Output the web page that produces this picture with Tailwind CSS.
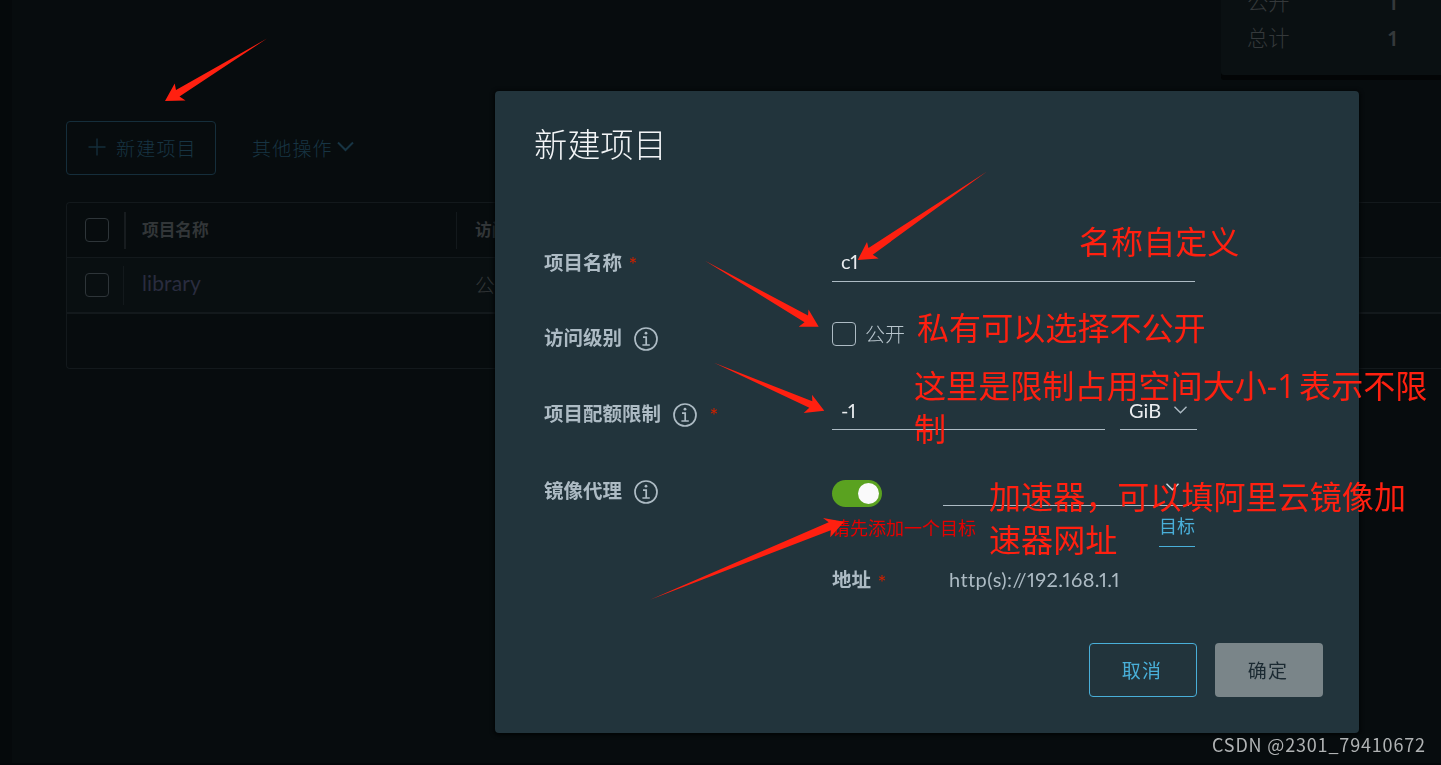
<!DOCTYPE html>
<html lang="zh-CN">
<head>
    <meta charset="UTF-8">
    <meta name="viewport" content="width=device-width, initial-scale=1.0">
    <title>新建项目</title>
    <script src="https://cdn.jsdelivr.net/npm/@tailwindcss/browser@4"></script>
</head>
<body class="bg-[#070c0e] h-[765px] overflow-hidden proportional-nums font-['Lato','Noto_Sans_CJK_SC',sans-serif]">
    <!-- Projects page, dimmed by the modal -->
    <div class="flex h-[765px] w-full border-b-2 border-[#04070a]">
        <div class="w-3 shrink-0 bg-[#05090b]"></div>
        <main class="flex-1 min-w-0 pl-[54px]">
            <!-- Summary card -->
            <div class="flex justify-end h-[121px]">
                <div class="flex flex-col justify-end w-[220px] h-[75px] pb-[19px] pl-[26px] pr-11 bg-[#0a1012] rounded-bl-[3px] shadow-[0_5px_0_#030506] text-[21.3px] text-[#35393b] font-light leading-9">
                    <div class="flex justify-between h-9 shrink-0">
                        <span>公开</span>
                        <span class="font-bold">1</span>
                    </div>
                    <div class="flex justify-between h-9 shrink-0">
                        <span>总计</span>
                        <span class="font-bold">1</span>
                    </div>
                </div>
            </div>

            <!-- Actions -->
            <div class="flex h-[54px] items-center text-[19px] text-[#173443] font-light">
                <button class="flex items-center w-[150px] h-[54px] pl-[21px] border border-[#152e3b] rounded">
                    <svg class="w-[18px] h-[18px] mr-[10px] -mt-[3px]" viewBox="0 0 18 18" fill="none" stroke="#152e3b" stroke-width="1.4"><path d="M9 0.5v17M0.5 9h17"/></svg>
                    <span class="tracking-[1.2px] whitespace-nowrap mt-0.5">新建项目</span>
                </button>
                <button class="flex items-center ml-9">
                    <span class="tracking-[1.2px] mt-0.5">其他操作</span>
                    <svg class="w-[17px] h-[11px] ml-1 -mt-1" viewBox="0 0 17 11" fill="none" stroke="currentColor" stroke-width="2"><path d="M1 1.5l7.5 7.5L16 1.5"/></svg>
                </button>
            </div>

            <!-- Project list -->
            <div class="mt-[27px] h-[167px] border border-r-0 border-[#13191c] rounded-l text-[#323638]">
                <div class="flex items-center h-[55px] border-b border-[#13191c] font-bold text-[16.7px]">
                    <div class="w-6 h-6 ml-[18px] border border-[#2e3539] rounded"></div>
                    <div class="w-0.5 h-[37px] ml-[15px] bg-[#171c1f]"></div>
                    <span class="ml-4 w-[314px] mt-px">项目名称</span>
                    <div class="w-px h-[37px] bg-[#13191c]"></div>
                    <span class="ml-[18px] mt-px">访问级别</span>
                </div>
                <div class="flex items-center h-[56px] border-b-2 border-[#13191c] bg-[#090f11] text-[20px] font-light">
                    <div class="w-6 h-6 ml-[18px] border border-[#2e3539] rounded"></div>
                    <div class="w-px h-[39px] ml-[14px] bg-[#13191c]"></div>
                    <span class="ml-[18px] w-[333px] -mt-1 text-[21px] text-[#292c3f] font-normal tracking-[0.1px]">library</span>
                    <span>公开</span>
                </div>
            </div>
        </main>
    </div>

    <!-- New project modal -->
    <div class="fixed inset-0 pt-[91px] pl-[495px]">
        <div class="w-[864px] h-[642px] pt-[26px] bg-[#22343c] rounded shadow-[0_1px_4px_1px_#020405] text-[#adbbc4]">
            <h3 class="h-[54px] pl-[39px] text-[33.2px] leading-[54px] font-light text-[#f2f4f6]">新建项目</h3>

            <form class="mt-[53px] pl-[49px] text-[19.5px]">
                <!-- Name -->
                <div class="flex h-[76px]">
                    <label class="flex items-center w-72 pt-px font-bold">项目名称<span class="ml-[7px] mt-px text-[16px] font-normal text-[#c92100] font-['Inter',sans-serif]">*</span></label>
                    <div class="flex items-center w-[363px] h-10 mt-[18px] pb-0.5 pl-[9px] border-b border-[#adbbc4] text-[20px] tracking-[-0.3px] text-[#e9ecef]">c1</div>
                </div>

                <!-- Access level -->
                <div class="flex h-[76px]">
                    <label class="flex items-center w-72 pb-px font-bold">访问级别
                        <svg class="w-6 h-6 ml-3 mt-[2px]" viewBox="0 0 24 24" fill="none" stroke="currentColor" stroke-width="1.7"><circle cx="12" cy="12" r="11"/><circle cx="12" cy="6.2" r="1.4" fill="currentColor" stroke="none"/><path d="M9 10.2h3.2v7.6M8.4 18h7.4"/></svg>
                    </label>
                    <div class="w-6 h-6 mt-[22px] border border-[#adbbc4] rounded"></div>
                    <span class="ml-[9px] mt-[19px] font-light text-[20px] text-[#b8c5cd]">公开</span>
                </div>

                <!-- Storage quota -->
                <div class="flex h-[76px]">
                    <label class="flex items-center w-72 pb-px font-bold">项目配额限制
                        <svg class="w-6 h-6 ml-3 mt-[2px]" viewBox="0 0 24 24" fill="none" stroke="currentColor" stroke-width="1.7"><circle cx="12" cy="12" r="11"/><circle cx="12" cy="6.2" r="1.4" fill="currentColor" stroke="none"/><path d="M9 10.2h3.2v7.6M8.4 18h7.4"/></svg>
                        <span class="ml-[13px] mt-px text-[16px] font-normal text-[#c92100] font-['Inter',sans-serif]">*</span>
                    </label>
                    <div class="flex items-center w-[273px] h-10 mt-[14px] pl-[9px] border-b border-[#adbbc4] text-[20px] tracking-[-0.5px] text-[#e9ecef]">-1</div>
                    <div class="flex items-center w-[77px] h-10 mt-[14px] ml-[15px] pl-[9px] border-b border-[#adbbc4] text-[20px] text-[#e9ecef]">
                        GiB
                        <svg class="w-[13px] h-2 ml-[13px]" viewBox="0 0 13 8" fill="none" stroke="#adbbc4" stroke-width="1.4"><path d="M0.5 0.8l6 6 6-6"/></svg>
                    </div>
                </div>

                <!-- Proxy cache -->
                <div class="flex h-[152px]">
                    <label class="flex items-center w-72 h-[76px] pt-px font-bold">镜像代理
                        <svg class="w-6 h-6 ml-3 mt-[2px]" viewBox="0 0 24 24" fill="none" stroke="currentColor" stroke-width="1.7"><circle cx="12" cy="12" r="11"/><circle cx="12" cy="6.2" r="1.4" fill="currentColor" stroke="none"/><path d="M9 10.2h3.2v7.6M8.4 18h7.4"/></svg>
                    </label>
                    <div class="w-[363px]">
                        <div class="flex h-[54px]">
                            <div class="flex justify-end items-center w-[50px] h-[27px] mt-7 pr-[3px] rounded-full bg-[#5aa220]">
                                <div class="w-[21px] h-[21px] rounded-full bg-[#fafafa]"></div>
                            </div>
                            <div class="flex justify-end w-[246px] ml-[61px] pr-[10px] pt-[31px] border-b border-[#adbbc4] text-[#d5dce0]">
                                <svg class="w-[13px] h-2" viewBox="0 0 13 8" fill="none" stroke="currentColor" stroke-width="1.4"><path d="M0.5 0.8l6 6 6-6"/></svg>
                            </div>
                        </div>
                        <div class="flex justify-between text-[18px]">
                            <span class="mt-[9px] font-normal text-[#e60000]">请先添加一个目标</span>
                            <a href="#" class="h-[41px] pt-[7px] border-b border-[#49afd9] text-[#49afd9]">目标</a>
                        </div>
                        <div class="flex items-center h-[46px] mt-[10px] text-[19.5px]">
                            <label class="flex items-center w-[117px] font-bold">地址<span class="ml-[7px] mt-[2px] text-[16px] font-normal text-[#c92100] font-['Inter',sans-serif]">*</span></label>
                            <span class="-mt-0.5 text-[20px] tracking-[0.42px]">http(s)://192.168.1.1</span>
                        </div>
                    </div>
                </div>

                <!-- Footer buttons -->
                <div class="flex justify-end gap-[18px] mt-[39px] pr-9 text-[19px]">
                    <button type="button" class="w-[108px] h-[54px] pt-0.5 pr-0.5 border border-[#49afd9] rounded text-[#49afd9] tracking-[1.2px]">取消</button>
                    <button type="button" class="w-[108px] h-[54px] pt-0.5 pr-0.5 bg-[#7a8589] rounded text-[#1b2a32] tracking-[1.2px]">确定</button>
                </div>
            </form>
        </div>
    </div>

    <!-- Annotations -->
    <div class="fixed inset-0 text-[32.1px] leading-[43px] text-[#ff2010] whitespace-nowrap">
        <svg class="absolute inset-0 w-[1441px] h-[765px]" viewBox="0 0 1441 765" fill="#ff2010">
            <path d="M267 38.5L176 90L174.7 83.5L165 101L185.5 100.5L179.5 96.5Z"/>
            <path d="M987 171.5L868.5 248L867 242L857.7 260L878.7 258.5L872.7 254.7Z"/>
            <path d="M705 260.7L808 315.6L808.5 309.5L818.7 326.7L798.7 326.7L804.5 322.3Z"/>
            <path d="M714 362.7L812.3 401.3L812 394.7L824.3 410.7L803.7 413L809.3 407.7Z"/>
            <path d="M650 599.8L828.7 522.3L823 518L844 521.7L830.3 537.3L830.8 530.3Z"/>
        </svg>
        <p class="absolute left-[1079px] top-[220px]">名称自定义</p>
        <p class="absolute left-[917px] top-[306px]">私有可以选择不公开</p>
        <p class="absolute left-[914px] top-[364px]">这里是限制占用空间大小<span class="tracking-[2px] mr-1 font-['Open_Sans',sans-serif]">-1</span>表示不限<br>制</p>
        <p class="absolute left-[989px] top-[475px]">加速器，可以填阿里云镜像加<br>速器网址</p>
        <p class="absolute left-[1212px] top-[733px] text-[18px] leading-[22px] tracking-[0.83px] text-[#b0b3b4] font-['Noto_Sans_CJK_SC',sans-serif]">CSDN @2301_79410672</p>
    </div>
</body>
</html>
